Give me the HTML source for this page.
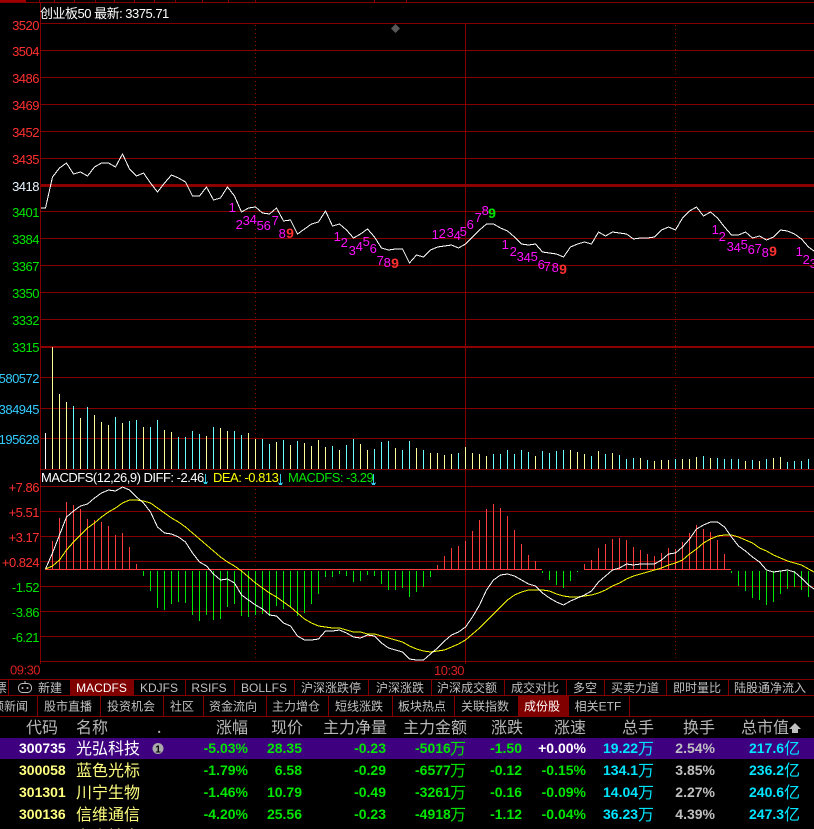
<!DOCTYPE html>
<html><head><meta charset="utf-8"><style>
html,body{margin:0;padding:0;background:#000;width:814px;height:829px;overflow:hidden}
svg{display:block}
text{font-family:"Liberation Sans","WenQuanYi Zen Hei","Noto Sans CJK SC",sans-serif;font-size:13px;letter-spacing:-.5px}
.g{stroke:#840000;stroke-width:1;fill:none;shape-rendering:crispEdges}
.c{shape-rendering:crispEdges;fill:none;stroke-width:1}
.r{fill:#ff3030}.n{fill:#00e600}.b{fill:#33ccff}
.m{fill:#ff10ff;text-anchor:middle}
.q{font-size:14px;font-weight:bold;letter-spacing:0}
.t{fill:#c0c0c0;text-anchor:middle;font-size:12px;letter-spacing:0}
.h{fill:#b8b8b8;font-size:16px;letter-spacing:0;font-family:"WenQuanYi Zen Hei","Noto Sans CJK SC",sans-serif}
.nm{font-size:16px;letter-spacing:0;font-family:"WenQuanYi Zen Hei","Noto Sans CJK SC",sans-serif}
.d{font-family:"Liberation Sans",sans-serif;font-size:14px;letter-spacing:0;font-weight:bold;text-anchor:end}
.dl{font-family:"Liberation Sans",sans-serif;font-size:14px;letter-spacing:0;font-weight:bold}
.u{font-size:16px;letter-spacing:0;font-family:"WenQuanYi Zen Hei","Noto Sans CJK SC",sans-serif}
</style></head><body>
<svg width="814" height="829" viewBox="0 0 814 829" xmlns="http://www.w3.org/2000/svg">
<rect width="814" height="829" fill="#000"/>
<!-- top strip -->
<rect x="0" y="0" width="26" height="2" fill="#a00000"/>
<path class="g" d="M0 2.5H814M39.5 0V2M54.5 0V2M74.5 0V2M95.5 0V2M114.5 0V2M134.5 0V2M154.5 0V2M175.5 0V2M202.5 0V2M228.5 0V2M255.5 0V2M374.5 0V2M406.5 0V2"/>
<!-- grid -->
<path class="g" d="M40 23.5H814M40 50.5H814M40 77.5H814M40 104.5H814M40 131.5H814M40 158.5H814M40 211.5H814M40 238.5H814M40 265.5H814M40 292.5H814M40 319.5H814M40 377.5H814M40 408.5H814M40 438.5H814M40 469.5H814M40 486.5H814M40 511.5H814M40 536.5H814M40 561.5H814M40 586.5H814M40 611.5H814M40 636.5H814M40 661.5H814"/>
<rect x="40" y="184" width="774" height="3" fill="#8c0000"/>
<rect x="40" y="346" width="774" height="2" fill="#8c0000"/>
<path class="g" d="M40.5 2V664M465.5 23V664" stroke="#840000"/>
<path class="c" stroke="#840000" stroke-dasharray="1 3" d="M255.5 25V664M675.5 25V664"/>
<!-- volume bars -->
<path class="c" stroke="#ffffff" d="M45.5 469V433"/>
<path class="c" stroke="#ffff99" d="M52.5 469V347M59.5 469V394M66.5 469V402M80.5 469V418M94.5 469V415M101.5 469V422M108.5 469V425M122.5 469V423M143.5 469V427M164.5 469V430M171.5 469V432M206.5 469V436M220.5 469V428M227.5 469V431M248.5 469V433M255.5 469V439M276.5 469V442M290.5 469V445M304.5 469V443M311.5 469V446M318.5 469V440M325.5 469V447M339.5 469V450M360.5 469V444M367.5 469V450M395.5 469V448M416.5 469V448M430.5 469V453M437.5 469V453M444.5 469V455M451.5 469V454M465.5 469V447M472.5 469V453M479.5 469V454M486.5 469V456M535.5 469V456M570.5 469V450M577.5 469V452M584.5 469V454M598.5 469V451M612.5 469V453M640.5 469V458M654.5 469V461M661.5 469V460M668.5 469V460M682.5 469V459M689.5 469V459M696.5 469V457M710.5 469V458M745.5 469V461M759.5 469V461M773.5 469V458M780.5 469V457"/>
<path class="c" stroke="#66ffff" d="M73.5 469V406M87.5 469V407M115.5 469V417M129.5 469V421M136.5 469V420M150.5 469V427M157.5 469V420M178.5 469V437M185.5 469V437M192.5 469V431M199.5 469V434M213.5 469V427M234.5 469V431M241.5 469V435M262.5 469V439M269.5 469V444M283.5 469V440M297.5 469V441M332.5 469V446M346.5 469V445M353.5 469V439M374.5 469V449M381.5 469V442M388.5 469V441M402.5 469V450M409.5 469V441M423.5 469V450M458.5 469V453M493.5 469V454M500.5 469V454M507.5 469V450M514.5 469V454M521.5 469V450M528.5 469V452M542.5 469V451M549.5 469V453M556.5 469V451M563.5 469V450M591.5 469V456M605.5 469V454M619.5 469V455M626.5 469V459M633.5 469V458M647.5 469V460M675.5 469V459M703.5 469V456M717.5 469V458M724.5 469V459M731.5 469V459M738.5 469V459M752.5 469V460M766.5 469V459M787.5 469V462M794.5 469V461M801.5 469V461M808.5 469V459"/>
<!-- macd bars -->
<path class="c" stroke="#ff3c3c" d="M52.5 569V541M59.5 569V518M66.5 569V502M73.5 569V505M80.5 569V509M87.5 569V519M94.5 569V520M101.5 569V522M108.5 569V526M115.5 569V535M122.5 569V533M129.5 569V547M136.5 569V564M437.5 569V565M444.5 569V556M451.5 569V548M458.5 569V546M465.5 569V541M472.5 569V531M479.5 569V520M486.5 569V509M493.5 569V504M500.5 569V508M507.5 569V516M514.5 569V530M521.5 569V544M528.5 569V555M535.5 569V561M584.5 569V564M591.5 569V560M598.5 569V548M605.5 569V544M612.5 569V539M619.5 569V538M626.5 569V540M633.5 569V547M640.5 569V550M647.5 569V554M654.5 569V556M661.5 569V553M668.5 569V548M675.5 569V549M682.5 569V542M689.5 569V533M696.5 569V525M703.5 569V529M710.5 569V532M717.5 569V540M724.5 569V554"/>
<path class="c" stroke="#ff3c3c" d="M45 569.5H542M584 569.5H731"/>
<path class="c" stroke="#00e600" d="M143.5 571V576M150.5 571V591M157.5 571V608M164.5 571V610M171.5 571V604M178.5 571V602M185.5 571V603M192.5 571V615M199.5 571V621M206.5 571V615M213.5 571V620M220.5 571V619M227.5 571V607M234.5 571V604M241.5 571V616M248.5 571V617M255.5 571V615M262.5 571V614M269.5 571V616M276.5 571V606M283.5 571V609M290.5 571V607M297.5 571V616M304.5 571V613M311.5 571V604M318.5 571V594M325.5 571V577M332.5 571V577M339.5 571V574M346.5 571V576M353.5 571V582M360.5 571V581M367.5 571V575M374.5 571V576M381.5 571V584M388.5 571V590M395.5 571V590M402.5 571V588M409.5 571V597M416.5 571V592M423.5 571V587M430.5 571V577M542.5 571V573M549.5 571V580M556.5 571V585M563.5 571V588M570.5 571V581M577.5 571V572M731.5 571V573M738.5 571V586M745.5 571V591M752.5 571V598M759.5 571V600M766.5 571V605M773.5 571V602M780.5 571V594M787.5 571V589M794.5 571V587M801.5 571V590M808.5 571V597"/>
<!-- DEA -->
<polyline class="c" stroke="#ffff00" points="45.5,569 52.5,566 59.5,560 66.5,550 73.5,542 80.5,535 87.5,528 94.5,523 101.5,517 108.5,512 115.5,508 122.5,503 129.5,500 136.5,500 143.5,501 150.5,503 157.5,508 164.5,513 171.5,518 178.5,522 185.5,527 192.5,533 199.5,539 206.5,545 213.5,551 220.5,557 227.5,562 234.5,566 241.5,571 248.5,577 255.5,583 262.5,588 269.5,593 276.5,597 283.5,602 290.5,607 297.5,613 304.5,619 311.5,623 318.5,626 325.5,627 332.5,628 339.5,628 346.5,630 353.5,632 360.5,632 367.5,634 374.5,634 381.5,636 388.5,638 395.5,640 402.5,642 409.5,646 416.5,649 423.5,651 430.5,652 437.5,651 444.5,650 451.5,647 458.5,644 465.5,640 472.5,634 479.5,628 486.5,621 493.5,614 500.5,607 507.5,600 514.5,595 521.5,592 528.5,590 535.5,590 542.5,590 549.5,591 556.5,594 563.5,596 570.5,597 577.5,597 584.5,596 591.5,595 598.5,593 605.5,590 612.5,586 619.5,583 626.5,579 633.5,576 640.5,574 647.5,572 654.5,570 661.5,568 668.5,565 675.5,563 682.5,560 689.5,554 696.5,549 703.5,543 710.5,539 717.5,536 724.5,535 731.5,535 738.5,537 745.5,540 752.5,543 759.5,548 766.5,551 773.5,555 780.5,558 787.5,561 794.5,563 801.5,565 808.5,569 814,572"/>
<!-- DIFF -->
<polyline class="c" stroke="#ffffff" points="45.5,569 52.5,553 59.5,535 66.5,517 73.5,511 80.5,506 87.5,504 94.5,498 101.5,493 108.5,490 115.5,491 122.5,487 129.5,490 136.5,497 143.5,503 150.5,512 157.5,527 164.5,533 171.5,534 178.5,537 185.5,542 192.5,553 199.5,562 206.5,566 213.5,574 220.5,580 227.5,579 234.5,583 241.5,595 248.5,600 255.5,605 262.5,609 269.5,615 276.5,616 283.5,623 290.5,626 297.5,636 304.5,640 311.5,640 318.5,639 325.5,631 332.5,631 339.5,630 346.5,633 353.5,637 360.5,638 367.5,635 374.5,636 381.5,643 388.5,648 395.5,650 402.5,652 409.5,659 416.5,660 423.5,660 430.5,654 437.5,648 444.5,641 451.5,635 458.5,632 465.5,627 472.5,617 479.5,605 486.5,590 493.5,580 500.5,575 507.5,574 514.5,576 521.5,580 528.5,584 535.5,586 542.5,593 549.5,598 556.5,602 563.5,605 570.5,601 577.5,598 584.5,595 591.5,591 598.5,582 605.5,576 612.5,570 619.5,568 626.5,564 633.5,565 640.5,564 647.5,564 654.5,564 661.5,560 668.5,554 675.5,553 682.5,547 689.5,539 696.5,529 703.5,525 710.5,522 717.5,522 724.5,527 731.5,537 738.5,546 745.5,551 752.5,557 759.5,562 766.5,570 773.5,572 780.5,571 787.5,570 794.5,572 801.5,578 808.5,585 814,589"/>
<!-- price -->
<polyline class="c" stroke="#ffffff" points="41,208 45.5,208 52.5,177 59.5,168 66.5,163 73.5,174 80.5,172 87.5,176 94.5,167 101.5,163 108.5,163 115.5,167 122.5,154 129.5,169 136.5,176 143.5,173 150.5,183 157.5,192 164.5,183 171.5,175 178.5,178 185.5,182 192.5,196 199.5,196 206.5,187 213.5,200 220.5,198 227.5,187 234.5,196 241.5,212 248.5,208 255.5,207 262.5,213 269.5,214 276.5,208 283.5,221 290.5,220 297.5,234 304.5,229 311.5,224 318.5,222 325.5,211 332.5,226 339.5,224 346.5,230 353.5,238 360.5,234 367.5,229 374.5,237 381.5,248 388.5,250 395.5,249 402.5,249 409.5,263 416.5,255 423.5,257 430.5,250 437.5,247 444.5,246 451.5,245 458.5,248 465.5,244 472.5,237 479.5,230 486.5,224 493.5,224 500.5,228 507.5,231 514.5,237 521.5,244 528.5,245 535.5,244 542.5,252 549.5,253 556.5,254 563.5,257 570.5,247 577.5,244 584.5,242 591.5,244 598.5,232 605.5,236 612.5,232 619.5,233 626.5,234 633.5,239 640.5,238 647.5,238 654.5,237 661.5,230 668.5,227 675.5,230 682.5,218 689.5,211 696.5,207 703.5,216 710.5,212 717.5,218 724.5,227 731.5,235 738.5,235 745.5,232 752.5,238 759.5,236 766.5,240 773.5,237 780.5,230 787.5,231 794.5,234 801.5,239 808.5,247 814,251"/>
<!-- diamond -->
<polygon points="395.5,24 400,28.5 395.5,33 391,28.5" fill="#585858"/>
<!-- TD numbers -->
<g>
<text class="m" x="232" y="212">1</text><text class="m" x="239" y="229">2</text><text class="m" x="246" y="225">3</text><text class="m" x="253" y="224">4</text><text class="m" x="260" y="230">5</text><text class="m" x="267" y="230">6</text><text class="m" x="275" y="225">7</text><text class="m" x="282" y="238">8</text><text class="m q" x="290" y="238" style="fill:#ff3030">9</text>
<text class="m" x="337" y="241">1</text><text class="m" x="344" y="247">2</text><text class="m" x="352" y="255">3</text><text class="m" x="359" y="251">4</text><text class="m" x="366" y="246">5</text><text class="m" x="373" y="253">6</text><text class="m" x="380" y="265">7</text><text class="m" x="387" y="267">8</text><text class="m q" x="395" y="268" style="fill:#ff3030">9</text>
<text class="m" x="435" y="239">1</text><text class="m" x="442" y="238">2</text><text class="m" x="450" y="237">3</text><text class="m" x="457" y="240">4</text><text class="m" x="463" y="236">5</text><text class="m" x="470" y="229">6</text><text class="m" x="478" y="222">7</text><text class="m" x="485" y="215">8</text><text class="m q" x="492" y="218" style="fill:#00e600">9</text>
<text class="m" x="505" y="249">1</text><text class="m" x="513" y="256">2</text><text class="m" x="520" y="261">3</text><text class="m" x="527" y="262">4</text><text class="m" x="534" y="261">5</text><text class="m" x="541" y="269">6</text><text class="m" x="547" y="271">7</text><text class="m" x="555" y="272">8</text><text class="m q" x="563" y="274" style="fill:#ff3030">9</text>
<text class="m" x="715" y="234">1</text><text class="m" x="722" y="241">2</text><text class="m" x="730" y="251">3</text><text class="m" x="737" y="252">4</text><text class="m" x="744" y="249">5</text><text class="m" x="751" y="254">6</text><text class="m" x="758" y="253">7</text><text class="m" x="765" y="257">8</text><text class="m q" x="773" y="256" style="fill:#ff3030">9</text>
<text class="m" x="799" y="256">1</text><text class="m" x="806" y="264">2</text><text class="m" x="813" y="268">3</text>
</g>
<!-- axis labels -->
<g text-anchor="end">
<text class="r" x="39" y="30">3520</text><text class="r" x="39" y="56">3504</text><text class="r" x="39" y="83">3486</text><text class="r" x="39" y="110">3469</text><text class="r" x="39" y="137">3452</text><text class="r" x="39" y="164">3435</text>
<text x="39" y="191" fill="#e8f4ff">3418</text>
<text class="n" x="39" y="217">3401</text><text class="n" x="39" y="244">3384</text><text class="n" x="39" y="271">3367</text><text class="n" x="39" y="298">3350</text><text class="n" x="39" y="325">3332</text><text class="n" x="39" y="352">3315</text>
<text class="b" x="39" y="383">580572</text><text class="b" x="39" y="414">384945</text><text class="b" x="39" y="444">195628</text>
<text class="r" x="39" y="492">+7.86</text><text class="r" x="39" y="517">+5.51</text><text class="r" x="39" y="542">+3.17</text><text class="r" x="39" y="567">+0.824</text>
<text class="n" x="39" y="592">-1.52</text><text class="n" x="39" y="617">-3.86</text><text class="n" x="39" y="642">-6.21</text>
</g>
<text x="10" y="674.500" fill="#d82020">09:30</text>
<text x="434" y="675" fill="#d82020">10:30</text>
<!-- header text -->
<text x="40" y="18" fill="#ffffff">创业板50 最新: 3375.71</text>
<rect x="41" y="470" width="340" height="16" fill="#000"/>
<text x="41" y="482" fill="#ffffff">MACDFS(12,26,9) DIFF: -2.46</text>
<path class="c" stroke="#33ccee" d="M205.5 474V484M204.5 482V484M206.5 482V484M203.5 481.5V482.5M207.5 481.5V482.5"/>
<text x="213" y="482" fill="#ffff00">DEA: -0.813</text>
<path class="c" stroke="#33ccee" d="M280.5 474V485M279.5 483V485M281.5 483V485M278.5 482.5V483.5M282.5 482.5V483.5"/>
<text x="288" y="482" fill="#00e600">MACDFS: -3.29</text>
<path class="c" stroke="#33ccee" d="M373.5 474V485M372.5 483V485M374.5 483V485M371.5 482.5V483.5M375.5 482.5V483.5"/>
<!-- tab row 1 -->
<rect x="70" y="679" width="64" height="16" fill="#800000"/>
<path class="g" d="M0 679.5H814M0 695.5H814M0 716.5H814M8.5 679V695M70.5 679V695M133.5 679V695M185.5 679V695M234.5 679V695M294.5 679V695M368.5 679V695M431.5 679V695M504.5 679V695M566.5 679V695M604.5 679V695M666.5 679V695M728.5 679V695"/>
<text x="-5" y="692" fill="#c0c0c0" style="font-size:12px;letter-spacing:0">票</text>
<rect x="18.5" y="683.5" width="13" height="9" rx="4" fill="none" stroke="#c0c0c0"/><path d="M25 681V683.5" stroke="#c0c0c0"/><circle cx="22.5" cy="688" r="1" fill="#c0c0c0"/><circle cx="27.5" cy="688" r="1" fill="#c0c0c0"/>
<text class="t" x="50" y="692">新建</text>
<text class="t" x="101.500" y="692" style="fill:#fff">MACDFS</text>
<text class="t" x="159" y="692">KDJFS</text>
<text class="t" x="209" y="692">RSIFS</text>
<text class="t" x="264" y="692">BOLLFS</text>
<text class="t" x="331" y="692">沪深涨跌停</text>
<text class="t" x="400" y="692">沪深涨跌</text>
<text class="t" x="467" y="692">沪深成交额</text>
<text class="t" x="535" y="692">成交对比</text>
<text class="t" x="585" y="692">多空</text>
<text class="t" x="635" y="692">买卖力道</text>
<text class="t" x="697" y="692">即时量比</text>
<text class="t" x="770" y="692">陆股通净流入</text>
<!-- tab row 2 -->
<rect x="518" y="696" width="51" height="20" fill="#800000"/>
<path class="g" d="M37.5 695V716M100.5 695V716M163.5 695V716M203.5 695V716M266.5 695V716M328.5 695V716M392.5 695V716M454.5 695V716M518.5 695V716M568.5 695V716M629.5 695V716"/>
<text class="t" x="10" y="710.500">频新闻</text>
<text class="t" x="68" y="710.500">股市直播</text>
<text class="t" x="131" y="710.500">投资机会</text>
<text class="t" x="182" y="710.500">社区</text>
<text class="t" x="233" y="710.500">资金流向</text>
<text class="t" x="296" y="710.500">主力增仓</text>
<text class="t" x="359" y="710.500">短线涨跌</text>
<text class="t" x="422" y="710.500">板块热点</text>
<text class="t" x="485" y="710.500">关联指数</text>
<text class="t" x="542" y="710.500" style="fill:#fff">成份股</text>
<text class="t" x="598" y="710.500">相关ETF</text>
<!-- table header -->
<g>
<text class="h" x="26" y="733">代码</text><text class="h" x="76" y="733">名称</text><text class="h" x="157" y="733">.</text>
<text class="h" x="216" y="733">涨幅</text><text class="h" x="271" y="733">现价</text><text class="h" x="323" y="733">主力净量</text><text class="h" x="403" y="733">主力金额</text><text class="h" x="491" y="733">涨跌</text><text class="h" x="554" y="733">涨速</text><text class="h" x="622" y="733">总手</text><text class="h" x="683" y="733">换手</text><text class="h" x="741" y="733">总市值</text>
</g>
<polygon points="795,723 801,729 798,729 798,733 792,733 792,729 789,729" fill="#c0c0c0"/>
<!-- rows -->
<rect x="0" y="738" width="814" height="21" fill="#3f0080"/>
<circle cx="158" cy="748.500" r="5.500" fill="#aaaaaa"/><text x="158" y="752.500" text-anchor="middle" style="font-size:10px;font-weight:bold;letter-spacing:0" fill="#000">1</text>

<text class="dl" x="19" y="753" fill="#fff">300735</text><text class="nm" x="76" y="754" fill="#fff">光弘科技</text>
<text class="d" x="248" y="753" fill="#00e600">-5.03%</text><text class="d" x="302" y="753" fill="#00e600">28.35</text><text class="d" x="386" y="753" fill="#00e600">-0.23</text>
<text class="dl" x="415" y="753" fill="#00e600">-5016</text><text class="u" x="450" y="754" fill="#00e600">万</text>
<text class="d" x="522" y="753" fill="#00e600">-1.50</text><text class="d" x="586" y="753" fill="#fff">+0.00%</text>
<text class="dl" x="603" y="753" fill="#00e5ff">19.22</text><text class="u" x="638" y="754" fill="#00e5ff">万</text>
<text class="d" x="715" y="753" fill="#c0c0c0">2.54%</text>
<text class="dl" x="749" y="753" fill="#00e5ff">217.6</text><text class="u" x="784" y="754" fill="#00e5ff">亿</text>

<text class="dl" x="19" y="775" fill="#ffff80">300058</text><text class="nm" x="76" y="776" fill="#ffff80">蓝色光标</text>
<text class="d" x="248" y="775" fill="#00e600">-1.79%</text><text class="d" x="302" y="775" fill="#00e600">6.58</text><text class="d" x="386" y="775" fill="#00e600">-0.29</text>
<text class="dl" x="415" y="775" fill="#00e600">-6577</text><text class="u" x="450" y="776" fill="#00e600">万</text>
<text class="d" x="522" y="775" fill="#00e600">-0.12</text><text class="d" x="586" y="775" fill="#00e600">-0.15%</text>
<text class="dl" x="603" y="775" fill="#00e5ff">134.1</text><text class="u" x="638" y="776" fill="#00e5ff">万</text>
<text class="d" x="715" y="775" fill="#c0c0c0">3.85%</text>
<text class="dl" x="749" y="775" fill="#00e5ff">236.2</text><text class="u" x="784" y="776" fill="#00e5ff">亿</text>

<text class="dl" x="19" y="797" fill="#ffff80">301301</text><text class="nm" x="76" y="798" fill="#ffff80">川宁生物</text>
<text class="d" x="248" y="797" fill="#00e600">-1.46%</text><text class="d" x="302" y="797" fill="#00e600">10.79</text><text class="d" x="386" y="797" fill="#00e600">-0.49</text>
<text class="dl" x="415" y="797" fill="#00e600">-3261</text><text class="u" x="450" y="798" fill="#00e600">万</text>
<text class="d" x="522" y="797" fill="#00e600">-0.16</text><text class="d" x="586" y="797" fill="#00e600">-0.09%</text>
<text class="dl" x="603" y="797" fill="#00e5ff">14.04</text><text class="u" x="638" y="798" fill="#00e5ff">万</text>
<text class="d" x="715" y="797" fill="#c0c0c0">2.27%</text>
<text class="dl" x="749" y="797" fill="#00e5ff">240.6</text><text class="u" x="784" y="798" fill="#00e5ff">亿</text>

<text class="dl" x="19" y="819" fill="#ffff80">300136</text><text class="nm" x="76" y="820" fill="#ffff80">信维通信</text>
<text class="d" x="248" y="819" fill="#00e600">-4.20%</text><text class="d" x="302" y="819" fill="#00e600">25.56</text><text class="d" x="386" y="819" fill="#00e600">-0.23</text>
<text class="dl" x="415" y="819" fill="#00e600">-4918</text><text class="u" x="450" y="820" fill="#00e600">万</text>
<text class="d" x="522" y="819" fill="#00e600">-1.12</text><text class="d" x="586" y="819" fill="#00e600">-0.04%</text>
<text class="dl" x="603" y="819" fill="#00e5ff">36.23</text><text class="u" x="638" y="820" fill="#00e5ff">万</text>
<text class="d" x="715" y="819" fill="#c0c0c0">4.39%</text>
<text class="dl" x="749" y="819" fill="#00e5ff">247.3</text><text class="u" x="784" y="820" fill="#00e5ff">亿</text>

<text class="nm" x="76" y="842" fill="#ffff80">东山精密</text>
</svg>
</body></html>
